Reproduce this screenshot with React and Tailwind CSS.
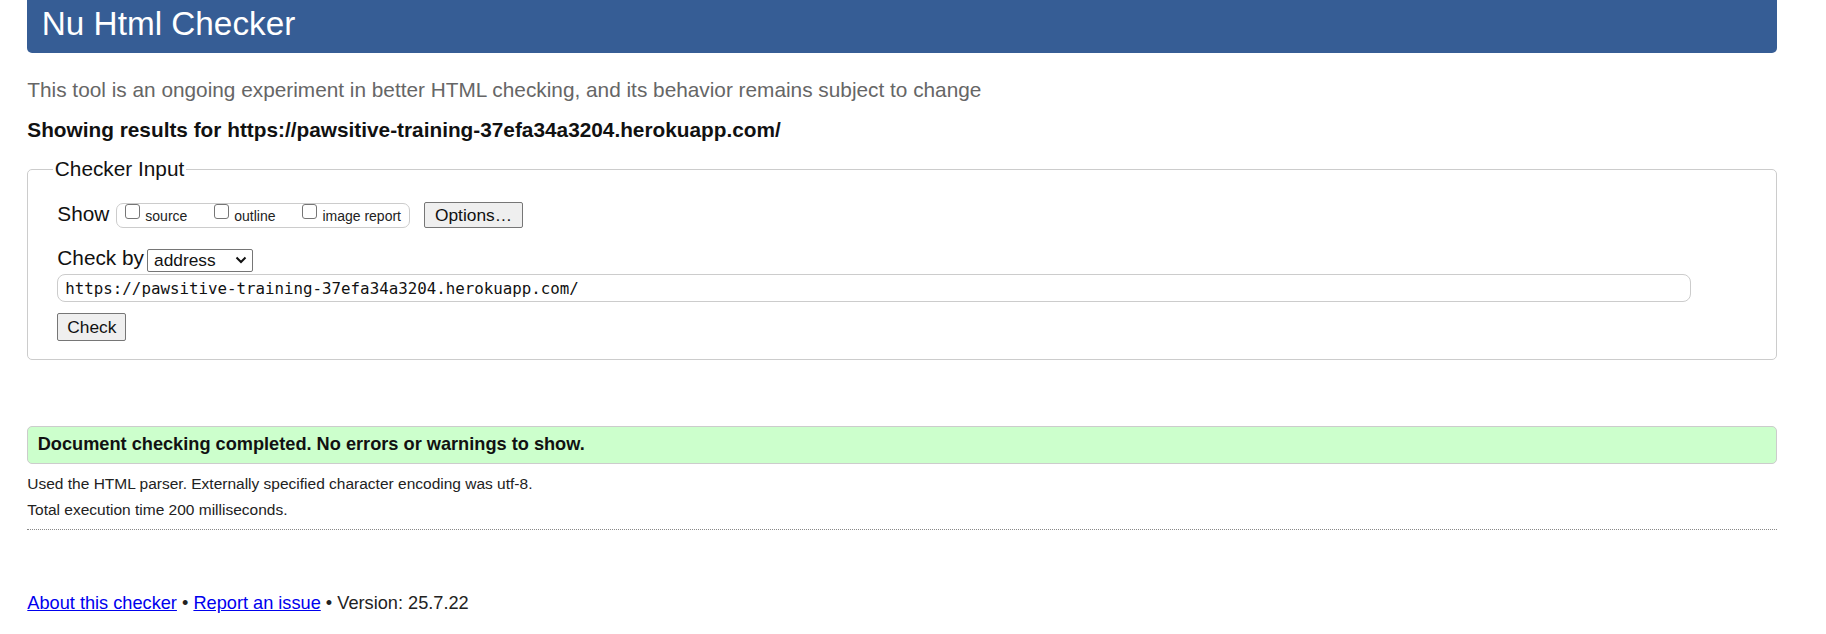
import React from "react";

const url = "https://pawsitive-training-37efa34a3204.herokuapp.com/";

function Box({ label, first }) {
  return (
    <label className={`flex items-start ${first ? "" : "ml-[26.6px]"}`}>
      <input
        type="checkbox"
        className="appearance-none w-[15px] h-[15px] border border-[#767676] rounded-[3px] bg-white"
      />
      <span className="ml-[5.3px] mt-[4px] text-[14px] leading-[16px] text-[#222]">{label}</span>
    </label>
  );
}

export default function App() {
  return (
    <div className="min-h-[634px] bg-white font-['Liberation_Sans',Arial,sans-serif] text-[#111]">
      <div className="ml-[27.3px] mr-[49.3px]">
        <h1 className="h-[53px] rounded-b-[5px] bg-[#365d95] pl-[14.5px] pt-[7px] text-[33.3px] leading-[33px] font-normal text-white">
          Nu Html Checker
        </h1>

        <p className="mt-[25px] text-[20.8px] leading-[24px] text-[#666]">
          This tool is an ongoing experiment in better HTML checking, and its behavior remains subject to change
        </p>
        <p className="mt-[15.5px] text-[20.8px] leading-[24px] font-bold">Showing results for {url}</p>

        {/* checker input */}
        <fieldset className="mt-[15.8px] border border-[#ccc] rounded-[5px] px-[29px] pb-[18.3px]">
          <legend className="-ml-[4.5px] px-[2px] text-[20.8px] leading-[24px]">Checker Input</legend>

          <div className="mt-[20.5px] flex items-start">
            <span className="text-[20.8px] leading-[24px]">Show</span>
            <div className="ml-[6.7px] mt-[1.5px] h-[24.4px] flex items-start border border-[#ccc] rounded-[7px] px-[8px]">
              <Box label="source" first />
              <Box label="outline" />
              <Box label="image report" />
            </div>
            <button className="ml-[14px] mt-[0.5px] h-[26px] px-[10px] text-[17.33px] leading-[20px] border border-[#767676] bg-[#efefef] rounded-[2px]">
              Options…
            </button>
          </div>

          <div className="mt-[17.5px] flex items-start">
            <span className="text-[20.8px] leading-[24px]">Check by</span>
            <div className="ml-[3px] mt-[3.2px] h-[22.7px] w-[106px] flex items-center justify-between border border-[#767676] rounded-[2px] bg-white pl-[6px] pr-[5px]">
              <span className="text-[17.33px] leading-[20px]">address</span>
              <svg width="12" height="8" viewBox="0 0 12 8">
                <path d="M1.5 1.5 L6 6 L10.5 1.5" fill="none" stroke="#111" strokeWidth="2" />
              </svg>
            </div>
          </div>

          <input
            type="text"
            readOnly
            value={url}
            className="mt-[2.6px] block h-[28px] w-[1633.4px] border border-[#ccc] rounded-[8px] pl-[7px] font-['DejaVu_Sans_Mono',monospace] text-[15.8px] text-[#111] outline-none"
          />

          <button className="mt-[11px] block h-[27.4px] px-[9px] text-[17.33px] leading-[20px] border border-[#767676] bg-[#efefef] rounded-[2px]">
            Check
          </button>
        </fieldset>

        {/* results */}
        <div className="mt-[66px] h-[37.7px] border border-[#ccc] rounded-[5px] bg-[#ccffcc] pl-[9.4px] pt-[6.5px]">
          <p className="text-[18.2px] leading-[22px] font-bold">
            Document checking completed. No errors or warnings to show.
          </p>
        </div>

        <p className="mt-[10px] text-[15.5px] leading-[20px] text-[#222]">
          Used the HTML parser. Externally specified character encoding was utf-8.
        </p>
        <p className="mt-[6.7px] text-[15.5px] leading-[20px] text-[#222]">Total execution time 200 milliseconds.</p>

        <div className="mt-[8.9px] border-t border-dotted border-[#888]" />

        <p className="mt-[62px] text-[18.2px] leading-[22px] text-[#222]">
          <a href="#" className="text-[#0000ee] underline">About this checker</a> •{" "}
          <a href="#" className="text-[#0000ee] underline">Report an issue</a> • Version: 25.7.22
        </p>
      </div>
    </div>
  );
}
